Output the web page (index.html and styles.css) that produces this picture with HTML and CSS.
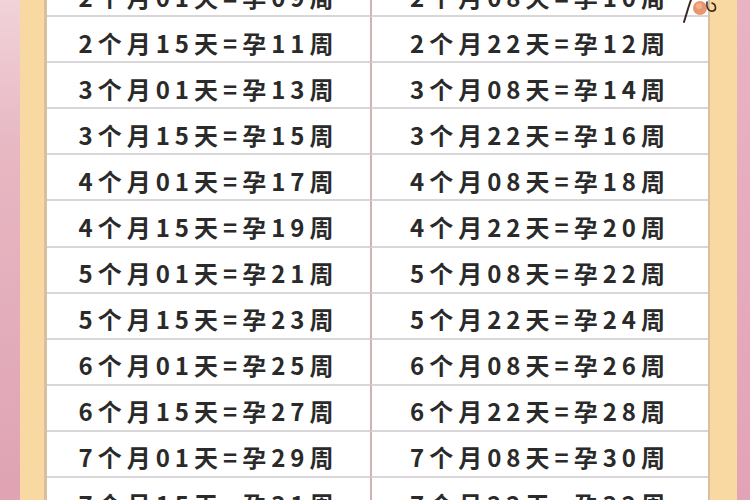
FILE: index.html
```html
<!DOCTYPE html>
<html lang="zh">
<head>
<meta charset="utf-8">
<link rel="stylesheet" href="styles.css">
</head>
<body>
<div class="page">
  <div class="pink pink-left"></div>
  <div class="frame">
    <div class="sheet">
      <div class="table">
        <div class="cell">2个月01天=孕09周</div><div class="cell right">2个月08天=孕10周</div>
        <div class="cell">2个月15天=孕11周</div><div class="cell right">2个月22天=孕12周</div>
        <div class="cell">3个月01天=孕13周</div><div class="cell right">3个月08天=孕14周</div>
        <div class="cell">3个月15天=孕15周</div><div class="cell right">3个月22天=孕16周</div>
        <div class="cell">4个月01天=孕17周</div><div class="cell right">4个月08天=孕18周</div>
        <div class="cell">4个月15天=孕19周</div><div class="cell right">4个月22天=孕20周</div>
        <div class="cell">5个月01天=孕21周</div><div class="cell right">5个月08天=孕22周</div>
        <div class="cell">5个月15天=孕23周</div><div class="cell right">5个月22天=孕24周</div>
        <div class="cell">6个月01天=孕25周</div><div class="cell right">6个月08天=孕26周</div>
        <div class="cell">6个月15天=孕27周</div><div class="cell right">6个月22天=孕28周</div>
        <div class="cell">7个月01天=孕29周</div><div class="cell right">7个月08天=孕30周</div>
        <div class="cell">7个月15天=孕31周</div><div class="cell right">7个月22天=孕32周</div>
      </div>
    </div>
  </div>
  <div class="pink pink-right"></div>
  <svg class="deco" width="50" height="26" viewBox="0 0 50 26">
    <circle cx="22" cy="8" r="7" fill="#e8966e"/>
    <circle cx="21" cy="6" r="3" fill="#f2b290"/>
    <path d="M6 22 C8 16 10 8 13 0" stroke="#3a2a20" stroke-width="2" fill="none" stroke-linecap="round"/>
    <path d="M29 2 C28 8 31 12 35 11 C39 10 38 4 34 3" stroke="#3a2a20" stroke-width="1.6" fill="none" stroke-linecap="round"/>
  </svg>
</div>
</body>
</html>
```
FILE: styles.css
```css
html, body {
  margin: 0;
  padding: 0;
}
body {
  width: 750px;
  height: 500px;
  overflow: hidden;
  font-family: "Noto Sans CJK SC", "Noto Sans", sans-serif;
}
.page {
  position: relative;
  display: flex;
  width: 750px;
  height: 500px;
  overflow: hidden;
}
.pink-left {
  width: 20px;
  background: linear-gradient(180deg, #f1d3d9 0%, #e7b7c2 30%, #dfa3b3 100%);
}
.pink-right {
  width: 13px;
  background: linear-gradient(180deg, #e9b3c3 0%, #e3a3b7 100%);
}
.frame {
  flex: 1;
  display: flex;
  background: #f9d9a2;
  padding: 0 27px 0 24px;
}
.sheet {
  flex: 1;
  background: #fff;
  border-left: 3px solid #d9bfa0;
  border-right: 2px solid #d9bfa0;
  overflow: hidden;
}
.table {
  display: grid;
  grid-template-columns: 323px 1fr;
  margin-top: -29px;
}
.cell {
  box-sizing: content-box;
  height: 38.1px;
  padding-top: 6px;
  border-bottom: 2px solid #d8d6d8;
  display: flex;
  align-items: center;
  justify-content: center;
  font-size: 24px;
  font-weight: 700;
  letter-spacing: 5px;
  color: #2a2a2a;
}
.cell.right {
  border-left: 2px solid #cfb2b4;
}
.deco {
  position: absolute;
  left: 678px;
  top: 0;
}
```
